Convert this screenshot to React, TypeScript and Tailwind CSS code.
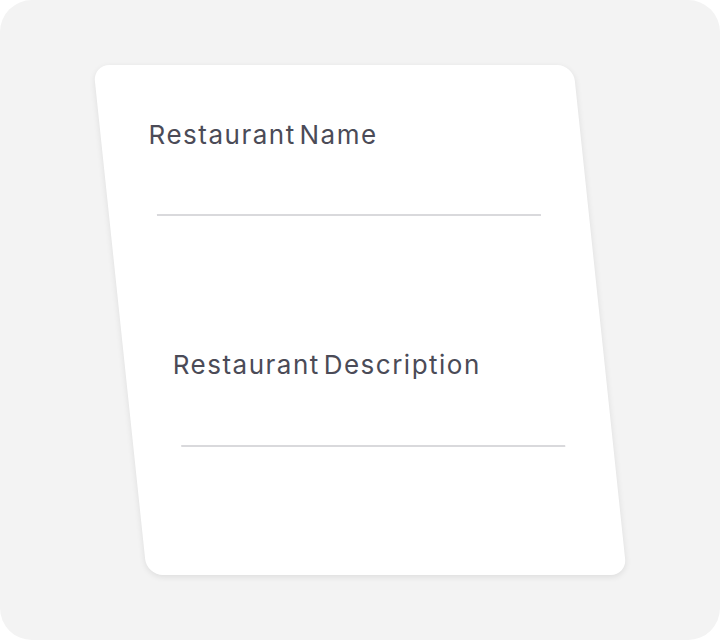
import React from 'react';

const Field: React.FC<{ label: string; className?: string; inputClass?: string }> = ({ label, className = '', inputClass = 'h-[64px]' }) => {
    return (
        <div className={`flex flex-col ${className}`}>
            <label className="skew-x-[-6deg] origin-left text-[26px] leading-[36px] tracking-[1.5px] [word-spacing:-5px] text-[#4b4b57] w-fit">
                {label}
            </label>
            <div className={`${inputClass} border-b-2 border-[#d9d9dc]`}></div>
        </div>
    );
};

export default function App() {
    return (
        <div className="w-[720px] h-[640px] bg-white" style={{ fontFamily: 'Inter, "Noto Sans", sans-serif' }}>
            <div className="w-full h-full rounded-[32px] bg-[#f3f3f3] flex items-center justify-center">
                <div className="w-[480px] h-[510px] bg-white rounded-2xl skew-x-[6deg] shadow-[0_2px_6px_rgba(0,0,0,0.09)] px-12 pt-[52px] flex flex-col">
                    <Field label="Restaurant Name" inputClass="h-[63px]" />
                    <Field label="Restaurant Description" className="mt-[131px]" />
                </div>
            </div>
        </div>
    );
}
